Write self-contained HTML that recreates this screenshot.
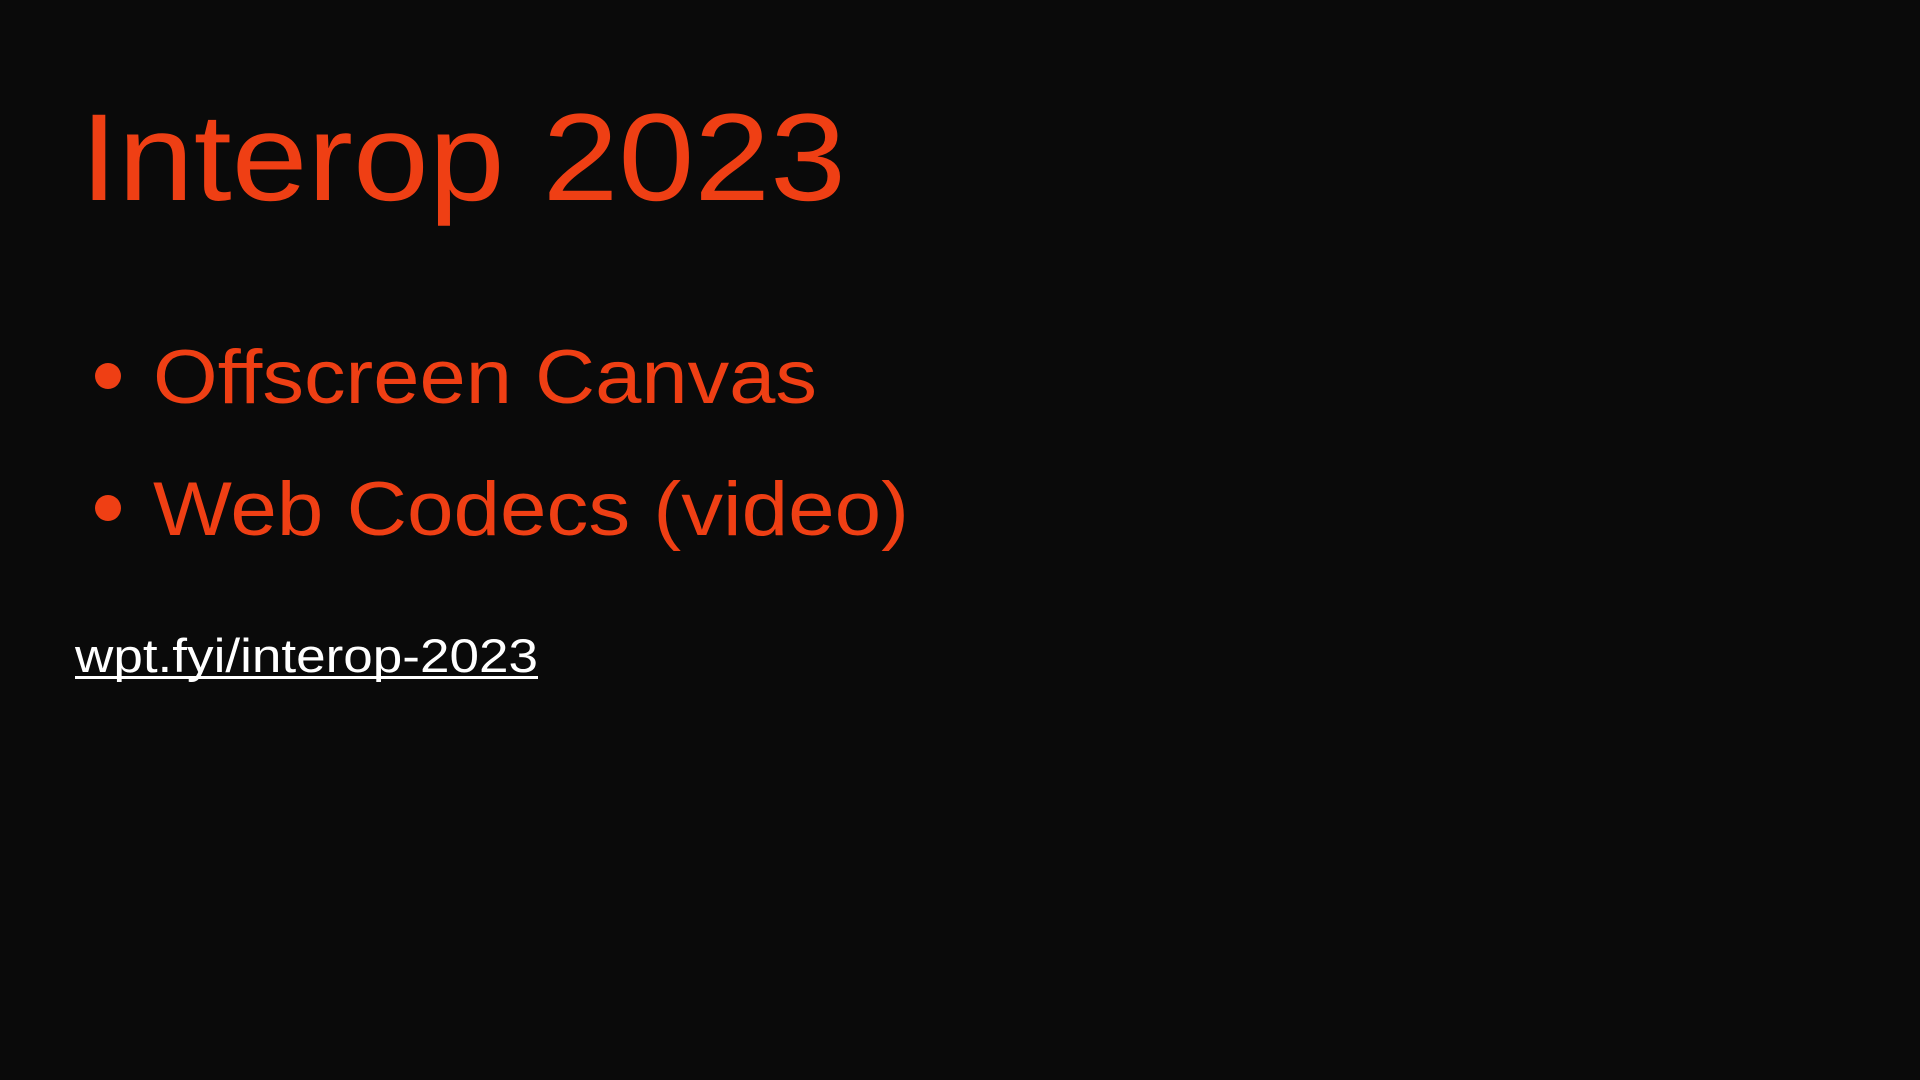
<!DOCTYPE html>
<html><head><meta charset="utf-8"><style>
html,body{margin:0;padding:0;background:#0a0a0a;width:1920px;height:1080px;overflow:hidden}
svg{display:block}
text{font-family:"Liberation Sans",sans-serif}
</style></head><body>
<svg width="1920" height="1080" viewBox="0 0 1920 1080">
<rect width="1920" height="1080" fill="#0a0a0a"/>
<text x="80" y="200" font-size="124" fill="#ef3f14" textLength="766" lengthAdjust="spacingAndGlyphs">Interop 2023</text>
<circle cx="108" cy="376" r="13" fill="#ef3f14"/>
<text x="153" y="403" font-size="76" fill="#ef3f14" textLength="664" lengthAdjust="spacingAndGlyphs">Offscreen Canvas</text>
<circle cx="108" cy="508" r="13" fill="#ef3f14"/>
<text x="153" y="535" font-size="76" fill="#ef3f14" textLength="756" lengthAdjust="spacingAndGlyphs">Web Codecs (video)</text>
<text x="75" y="672" font-size="47" fill="#ffffff" textLength="463" lengthAdjust="spacingAndGlyphs">wpt.fyi/interop-2023</text>
<rect x="75" y="676" width="463" height="3" fill="#ffffff"/>
</svg>
</body></html>
